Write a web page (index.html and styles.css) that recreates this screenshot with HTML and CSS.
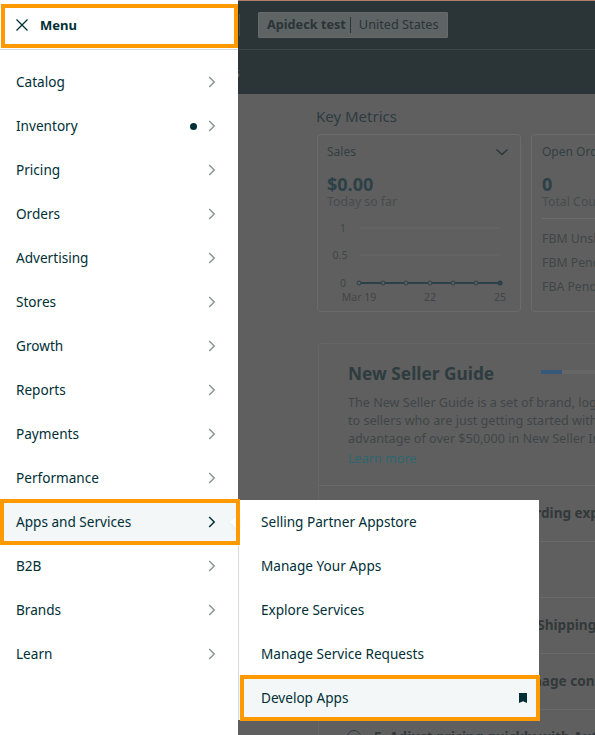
FILE: index.html
```html
<!DOCTYPE html>
<html lang="en">
<head>
<meta charset="utf-8">
<title>Seller Central Menu</title>
<link rel="stylesheet" href="styles.css">
</head>
<body>
<div class="page">
  <header class="topbar">
    <div class="topbar-main">
      <span class="topbar-divider"></span>
      <div class="chip"><strong class="chip-name">Apideck test</strong><span class="chip-sep"></span><span class="chip-region">United States</span></div>
    </div>
    <div class="topbar-nav"><span class="topbar-link">Orders</span></div>
  </header>
  <main class="content">
    <h2 class="metrics-title">Key Metrics</h2>
    <div class="metrics">
      <section class="card card-sales">
        <div class="card-head"><span>Sales</span>
          <svg class="card-chevron" width="14" height="8" viewBox="0 0 14 8"><path d="M1.5 1.5 7 6.5l5.5-5" fill="none" stroke="#2c383b" stroke-width="1.5"/></svg>
        </div>
        <div class="figure">$0.00</div>
        <div class="figure-note">Today so far</div>
        <svg class="chart" width="204" height="90" viewBox="0 0 204 90">
          <g class="chart-grid"><line x1="42" y1="10" x2="183" y2="10"/><line x1="42" y1="37" x2="183" y2="37"/></g>
          <g class="chart-label"><text x="26" y="14" text-anchor="middle">1</text><text x="23" y="41" text-anchor="middle">0.5</text><text x="26" y="69" text-anchor="middle">0</text><text x="42" y="83" text-anchor="middle">Mar 19</text><text x="113" y="83" text-anchor="middle">22</text><text x="183" y="83" text-anchor="middle">25</text></g>
          <line class="chart-line" x1="42" y1="65" x2="183" y2="65"/>
          <g class="chart-dot"><circle cx="42" cy="65" r="2"/><circle cx="66" cy="65" r="2"/><circle cx="89" cy="65" r="2"/><circle cx="113" cy="65" r="2"/><circle cx="136" cy="65" r="2"/><circle cx="159" cy="65" r="2"/></g>
          <circle class="chart-end" cx="183" cy="65" r="2.5"/>
        </svg>
      </section>
      <section class="card card-orders">
        <div class="card-head"><span>Open Orders</span></div>
        <div class="figure">0</div>
        <div class="figure-note orders-note">Total Count</div>
        <ul class="order-list">
          <li>FBM Unshipped</li>
          <li>FBM Pending</li>
          <li>FBA Pending</li>
        </ul>
      </section>
    </div>
    <section class="guide">
      <div class="guide-top">
        <div class="guide-title-row"><h2 class="guide-title">New Seller Guide</h2><div class="progress"><span class="progress-fill"></span></div></div>
        <p class="guide-text">The New Seller Guide is a set of brand, logistics and advertising services<br>to sellers who are just getting started with Amazon. You can take<br>advantage of over $50,000 in New Seller Incentives.</p>
        <a class="guide-link">Learn more</a>
      </div>
      <div class="guide-row"><span class="guide-step">1. Complete your onboarding experience</span></div>
      <div class="guide-row"><span class="guide-step">2. Add your first listing</span></div>
      <div class="guide-row"><span class="guide-step">3. Configuring your FBA Shipping</span></div>
      <div class="guide-row"><span class="guide-step">4. Discover how you manage content</span></div>
      <div class="guide-row guide-row-last"><span class="guide-radio"></span><span class="guide-step">5. Adjust pricing quickly with Automate</span></div>
    </section>
  </main>

  <nav class="sidebar">
    <div class="menu-head">
      <svg class="close-icon" width="12" height="12" viewBox="0 0 12 12"><path d="M.5.5l11 11M11.5.5l-11 11" fill="none" stroke="#002f36" stroke-width="1.3"/></svg>
      <span class="menu-title">Menu</span>
    </div>
    <ul class="menu-list">
      <li class="menu-item"><span class="menu-label">Catalog</span><svg class="chev" width="8" height="12" viewBox="0 0 8 12"><path d="M1.2 1 6.2 6l-5 5" /></svg></li>
      <li class="menu-item"><span class="menu-label">Inventory</span><span class="dot"></span><svg class="chev" width="8" height="12" viewBox="0 0 8 12"><path d="M1.2 1 6.2 6l-5 5" /></svg></li>
      <li class="menu-item"><span class="menu-label">Pricing</span><svg class="chev" width="8" height="12" viewBox="0 0 8 12"><path d="M1.2 1 6.2 6l-5 5" /></svg></li>
      <li class="menu-item"><span class="menu-label">Orders</span><svg class="chev" width="8" height="12" viewBox="0 0 8 12"><path d="M1.2 1 6.2 6l-5 5" /></svg></li>
      <li class="menu-item"><span class="menu-label">Advertising</span><svg class="chev" width="8" height="12" viewBox="0 0 8 12"><path d="M1.2 1 6.2 6l-5 5" /></svg></li>
      <li class="menu-item"><span class="menu-label">Stores</span><svg class="chev" width="8" height="12" viewBox="0 0 8 12"><path d="M1.2 1 6.2 6l-5 5" /></svg></li>
      <li class="menu-item"><span class="menu-label">Growth</span><svg class="chev" width="8" height="12" viewBox="0 0 8 12"><path d="M1.2 1 6.2 6l-5 5" /></svg></li>
      <li class="menu-item"><span class="menu-label">Reports</span><svg class="chev" width="8" height="12" viewBox="0 0 8 12"><path d="M1.2 1 6.2 6l-5 5" /></svg></li>
      <li class="menu-item"><span class="menu-label">Payments</span><svg class="chev" width="8" height="12" viewBox="0 0 8 12"><path d="M1.2 1 6.2 6l-5 5" /></svg></li>
      <li class="menu-item"><span class="menu-label">Performance</span><svg class="chev" width="8" height="12" viewBox="0 0 8 12"><path d="M1.2 1 6.2 6l-5 5" /></svg></li>
      <li class="menu-item is-active"><span class="menu-label">Apps and Services</span><svg class="chev" width="8" height="12" viewBox="0 0 8 12"><path d="M1.2 1 6.2 6l-5 5" /></svg></li>
      <li class="menu-item"><span class="menu-label">B2B</span><svg class="chev" width="8" height="12" viewBox="0 0 8 12"><path d="M1.2 1 6.2 6l-5 5" /></svg></li>
      <li class="menu-item"><span class="menu-label">Brands</span><svg class="chev" width="8" height="12" viewBox="0 0 8 12"><path d="M1.2 1 6.2 6l-5 5" /></svg></li>
      <li class="menu-item"><span class="menu-label">Learn</span><svg class="chev" width="8" height="12" viewBox="0 0 8 12"><path d="M1.2 1 6.2 6l-5 5" /></svg></li>
    </ul>
  </nav>

  <ul class="submenu">
    <li class="sub-item"><span class="menu-label">Selling Partner Appstore</span></li>
    <li class="sub-item"><span class="menu-label">Manage Your Apps</span></li>
    <li class="sub-item"><span class="menu-label">Explore Services</span></li>
    <li class="sub-item"><span class="menu-label">Manage Service Requests</span></li>
    <li class="sub-item is-active"><span class="menu-label">Develop Apps</span>
      <svg class="bookmark" width="8" height="10" viewBox="0 0 8 10"><path d="M0 0h8v10L4 8.2 0 10z" fill="#002f36"/></svg>
    </li>
  </ul>
</div>
</body>
</html>
```

FILE: styles.css
```css
*, *::before, *::after { box-sizing: border-box; }
html, body { margin: 0; padding: 0; }
body { font-family: "Noto Sans", "Open Sans", sans-serif; background: #5f5f5f; }
ul { list-style: none; margin: 0; padding: 0; }
h2, p { margin: 0; }

.page { position: relative; width: 595px; height: 735px; overflow: hidden; background: #5f5f5f; color: #2c383b; }

/* dimmed dashboard */
.topbar { height: 94px; background: #2b3437; border-top: 1px solid #b0806d; }
.topbar-main { height: 49px; padding: 0 0 0 239px; display: flex; align-items: center; gap: 18px; border-bottom: 1px solid #3d4649; }
.topbar-divider { width: 1px; height: 22px; background: #454d50; }
.chip { width: 190px; height: 26px; display: flex; align-items: center; padding: 0 0 2px 8px; background: #5e6364; border: 1px solid #666a6b; border-radius: 1px; font-size: 12.7px; color: #2b3437; white-space: nowrap; }
.chip-name { font-weight: 700; }
.chip-sep { width: 1px; height: 16px; background: #2b3437; margin: 2px 8px 0 4px; }
.topbar-nav { width: 240px; height: 44px; display: flex; align-items: center; justify-content: flex-end; }
.topbar-link { font-size: 13px; color: #5e6364; }

.content { padding: 12px 0 0 316px; width: 900px; }
.metrics-title { font-size: 15px; line-height: 20px; font-weight: 400; color: #2e3c3f; }
.metrics { display: flex; gap: 10px; margin-top: 8px; margin-left: 1px; }
.card { width: 204px; height: 178px; border: 1px solid #6b6b6b; border-radius: 4px; padding: 8px 0 0 9px; flex: none; }
.card-head { display: flex; justify-content: space-between; align-items: center; font-size: 12px; line-height: 18px; padding-right: 11px; color: #333f42; }
.figure { margin-top: 11px; font-size: 18px; line-height: 24px; font-weight: 700; color: #2c4047; }
.figure-note { font-size: 12.3px; line-height: 12px; color: #474c4e; white-space: nowrap; }
.chart { display: block; margin: 10px 0 0 -10px; }
.chart-grid line { stroke: #696969; stroke-width: 1; }
.chart-label text { font-size: 10.5px; fill: #3f4648; font-family: "Noto Sans", sans-serif; }
.chart-line { stroke: #2c4047; stroke-width: 2; }
.chart-dot circle { fill: #5f5f5f; stroke: #2c4047; stroke-width: 1; }
.chart-end { fill: #2c4047; }
.orders-note { padding-bottom: 10px; border-bottom: 1px solid #6b6b6b; margin-left: 1px; }
.card-orders .figure, .card-orders .card-head { margin-left: 1px; }
.order-list { margin: 8px 0 0 1px; font-size: 12.3px; line-height: 24px; color: #3f4648; white-space: nowrap; }
.guide { margin-top: 31px; margin-left: 2px; width: 560px; border: 1px solid #666; border-radius: 4px; }
.guide-top { height: 141px; padding: 17px 0 0 29px; }
.guide-title-row { display: flex; align-items: center; gap: 47px; }
.guide-title { font-size: 17.3px; line-height: 25px; font-weight: 700; color: #2e3c3f; white-space: nowrap; }
.progress { width: 160px; height: 4px; margin-top: -3px; background: #666; }
.progress-fill { display: block; width: 21px; height: 4px; background: #36587a; }
.guide-text { margin-top: 8px; font-size: 12.6px; line-height: 18px; color: #3f4648; white-space: nowrap; }
.guide-link { display: block; margin-top: 2px; font-size: 12.6px; line-height: 18px; color: #2d6670; }
.guide-row { height: 56px; border-top: 1px solid #6a6a6a; padding: 0 0 2px 55px; display: flex; align-items: center; font-size: 13.6px; font-weight: 700; color: #33393b; white-space: nowrap; }
.guide-row-last { position: relative; }
.guide-radio { position: absolute; left: 28px; width: 14px; height: 14px; border: 1px solid #2e3c3f; border-radius: 50%; }

/* main menu */
.sidebar { position: absolute; z-index: 2; left: 0; top: 0; bottom: 0; width: 238px; background: #fff; color: #002f36; }
.menu-head { position: relative; height: 50px; padding: 0 0 0 16px; border-bottom: 1px solid #d5dbdb; display: flex; align-items: center; gap: 12px; }
.menu-head::after { content: ""; position: absolute; left: 1px; right: 0; top: 4px; height: 44px; border: 4px solid #ff9900; }
.close-icon { flex: none; }
.menu-title { font-size: 13px; font-weight: 700; }
.menu-list { padding-top: 10px; }
.menu-item { position: relative; height: 44px; padding: 0 22px 0 16px; display: flex; align-items: center; }
.menu-label { font-size: 13.6px; white-space: nowrap; color: #002f36; margin-bottom: 2px; }
.chev { margin-left: auto; flex: none; fill: none; stroke: #8a9597; stroke-width: 1.5; }
.dot { width: 7px; height: 7px; margin-left: auto; margin-right: 11px; border-radius: 50%; background: #002f36; }
.dot + .chev { margin-left: 0; }
.menu-item.is-active { background: #f3f7f8; }
.menu-item.is-active .chev { stroke: #002f36; }
.menu-item.is-active::before { content: ""; position: absolute; right: 2px; top: 16px; border-style: solid; border-width: 6px 6px 6px 0; border-color: transparent #fff transparent transparent; filter: drop-shadow(2px 1px 2px rgba(0,0,0,.12)); }
.menu-item.is-active::after { content: ""; position: absolute; left: 0; right: -2px; top: -1px; bottom: -1px; border: 4px solid #ff9900; }

/* submenu */
.submenu { position: absolute; left: 238px; top: 500px; width: 301px; height: 220px; background: #fff; border-left: 1px solid #d5dbdb; }
.sub-item { position: relative; height: 44px; padding: 0 12px 0 22px; display: flex; align-items: center; justify-content: space-between; }
.sub-item.is-active { background: #f3f7f8; }
.sub-item.is-active::after { content: ""; position: absolute; left: 1px; right: -1px; top: -1px; bottom: -1px; border: 4px solid #ff9900; }
.bookmark { flex: none; }
```
